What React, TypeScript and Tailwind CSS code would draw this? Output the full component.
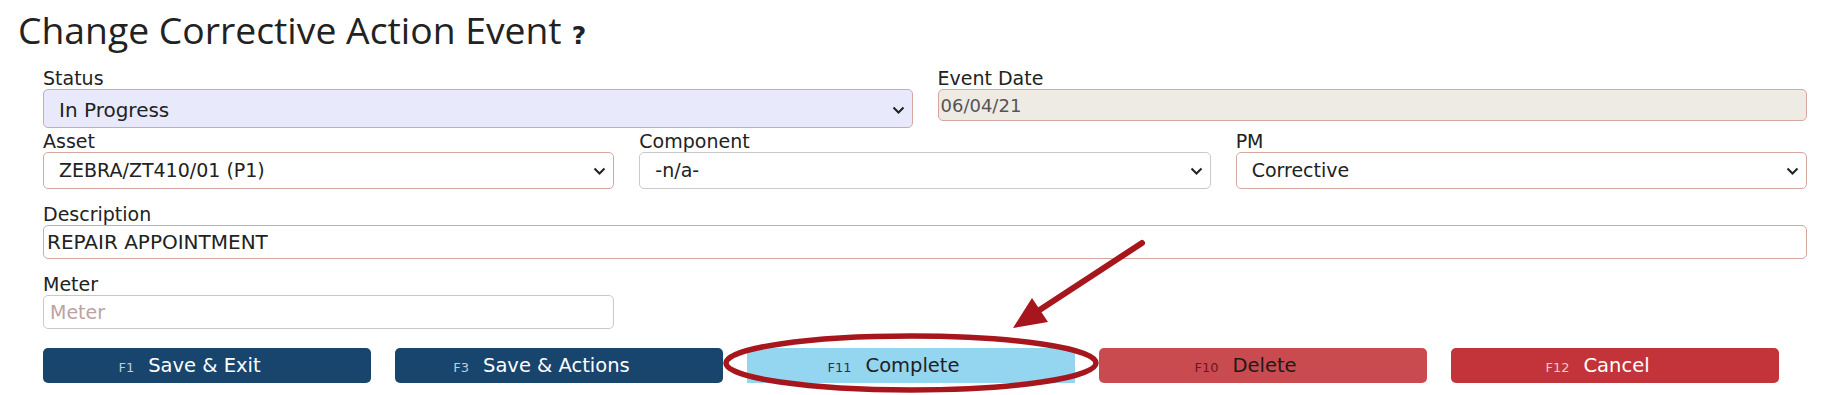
import React from "react";

const label = "h-[22px] leading-[22px] text-[19px] text-[#222]";
const pinkBox = "border border-[#d6a7a1] rounded-[5px]";
const grayBox = "border border-[#c9c9c9] rounded-[5px]";

function Chevron() {
    return (
        <svg width="13" height="8" viewBox="0 0 13 8" className="shrink-0">
            <path d="M1.5 1.5l5 5 5-5" fill="none" stroke="#222" strokeWidth="2" />
        </svg>
    );
}

function SelectBox({ value, className }: { value: string; className: string }) {
    return (
        <div className={`flex items-center justify-between pl-[15px] pr-[7px] text-[#222] ${className}`}>
            <span>{value}</span>
            <Chevron />
        </div>
    );
}

interface Action {
    key: string;
    text: string;
    btn: string;
    keyColor: string;
    textColor: string;
}

const actions: Action[] = [
    { key: "F1", text: "Save & Exit", btn: "bg-[#17456e] rounded-[5px]", keyColor: "text-[#c3ccd6]", textColor: "text-white" },
    { key: "F3", text: "Save & Actions", btn: "bg-[#17456e] rounded-[5px]", keyColor: "text-[#c3ccd6]", textColor: "text-white" },
    { key: "F11", text: "Complete", btn: "bg-[#94d6f0]", keyColor: "text-[#333]", textColor: "text-[#222]" },
    { key: "F10", text: "Delete", btn: "bg-[#c94b4f] rounded-[5px]", keyColor: "text-[#6e1717]", textColor: "text-[#1e1a1a]" },
    { key: "F12", text: "Cancel", btn: "bg-[#c3343a] rounded-[5px]", keyColor: "text-[#e9c9ca]", textColor: "text-white" },
];

export default function App() {
    return (
        <div className="relative h-[395px] w-[1847px] overflow-hidden bg-white" style={{ fontFamily: "'DejaVu Sans', Verdana, sans-serif" }}>
            {/* TITLE */}
            <div className="flex items-baseline pl-[18px] pt-[6px] h-[54px]">
                <h1 className="text-[37.3px] leading-[48px] text-[#222]" style={{ fontFamily: "'Open Sans', sans-serif" }}>
                    Change Corrective Action Event
                </h1>
                <span className="ml-[10px] text-[25px] font-bold text-[#222]">?</span>
            </div>

            {/* FORM */}
            <div className="pl-[43px] w-[1807px] mt-[13px]">
                <div className="grid grid-cols-2 gap-x-[25px] items-start">
                    <div>
                        <div className={label}>Status</div>
                        <SelectBox value="In Progress" className={`h-[39px] pt-[2px] text-[20px] bg-[#e8eafc] ${pinkBox}`} />
                    </div>
                    <div>
                        <div className={label}>Event Date</div>
                        <div className={`h-[32px] flex items-center pl-[2px] text-[18px] text-[#555] bg-[#eeebe5] ${pinkBox}`}>06/04/21</div>
                    </div>
                </div>

                <div className="grid grid-cols-3 gap-x-[25px] mt-[2px]">
                    <div>
                        <div className={label}>Asset</div>
                        <SelectBox value="ZEBRA/ZT410/01 (P1)" className={`h-[37px] text-[19px] bg-white ${pinkBox}`} />
                    </div>
                    <div>
                        <div className={label}>Component</div>
                        <SelectBox value="-n/a-" className={`h-[37px] text-[19px] bg-white ${grayBox}`} />
                    </div>
                    <div>
                        <div className={label}>PM</div>
                        <SelectBox value="Corrective" className={`h-[37px] text-[19px] bg-white ${pinkBox}`} />
                    </div>
                </div>

                <div className="mt-[14px]">
                    <div className={label}>Description</div>
                    <div className={`h-[34px] flex items-center pl-[3px] text-[20px] text-[#222] ${pinkBox}`}>REPAIR APPOINTMENT</div>
                </div>

                <div className="grid grid-cols-3 gap-x-[25px] mt-[14px]">
                    <div>
                        <div className={label}>Meter</div>
                        <div className={`h-[34px] flex items-center pl-[6px] text-[19px] text-[#bba3a3] ${grayBox}`}>Meter</div>
                    </div>
                </div>

                {/* BUTTONS */}
                <div className="flex gap-[24px] mt-[19px]">
                    {actions.map((a) => (
                        <div key={a.key} className={`w-[328px] h-[35px] flex items-center justify-center pr-[35px] ${a.btn}`}>
                            <div className="flex items-baseline">
                                <span className={`text-[13px] ${a.keyColor}`}>{a.key}</span>
                                <span className={`ml-[14px] text-[19.5px] ${a.textColor}`}>{a.text}</span>
                            </div>
                        </div>
                    ))}
                </div>
            </div>

            {/* ANNOTATION */}
            <svg className="absolute left-0 top-0 pointer-events-none" width="1847" height="395" viewBox="0 0 1847 395">
                <ellipse cx="911" cy="363" rx="185" ry="27" fill="none" stroke="#a7161d" strokeWidth="5.5" />
                <line x1="1142" y1="243" x2="1038" y2="311" stroke="#a7161d" strokeWidth="6" strokeLinecap="round" />
                <polygon points="1013,328 1032,298 1048,322" fill="#a7161d" />
            </svg>
        </div>
    );
}
